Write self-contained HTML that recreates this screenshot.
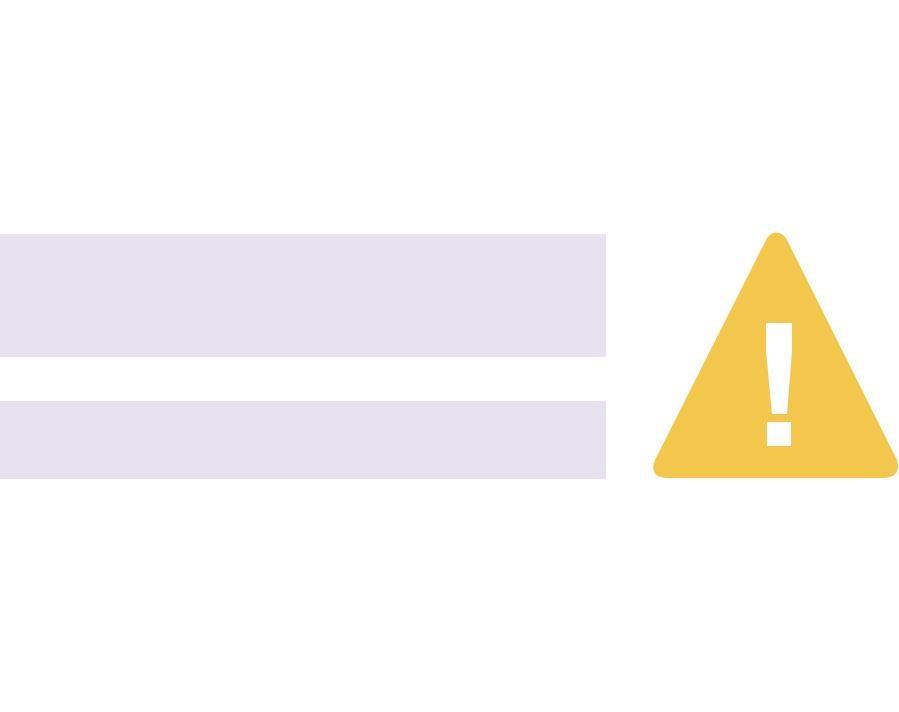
<!DOCTYPE html>
<html><head><style>
html,body{margin:0;padding:0;background:#fff;width:899px;height:712px;overflow:hidden;position:relative}
.b{position:absolute;left:0;width:606px;background:#e8e1ef}
</style></head><body>
<div class="b" style="top:234px;height:123px"></div>
<div class="b" style="top:401px;height:78px"></div>
<svg style="position:absolute;left:0;top:0" width="899" height="712">
<path d="M767 238 Q776 227 786 238 L897 460 Q902 478 882 478 L669 478 Q648 478 655 460 Z" fill="#f3c74c"/>
<path d="M766 323 L792 323 L792 351 L787 414 L772 414 L766 351 Z" fill="#fff"/>
<rect x="767" y="422" width="24" height="24" fill="#fff"/>
</svg>
</body></html>
